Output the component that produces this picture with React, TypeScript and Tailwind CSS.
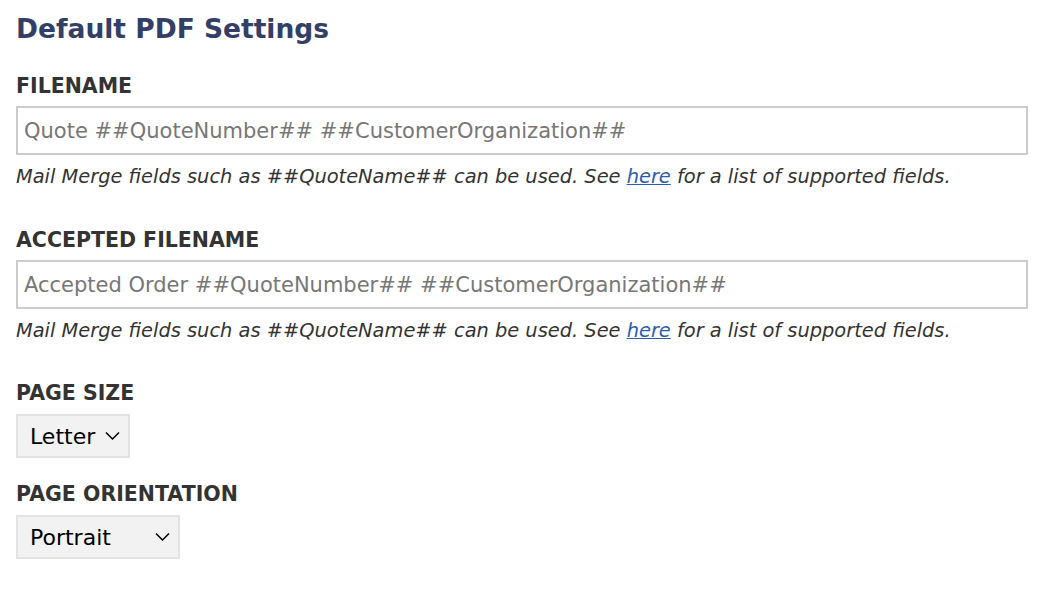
import React from "react";

const font = { fontFamily: '"DejaVu Sans", Verdana, sans-serif' };

const HelpText = () => (
  <p className="mt-[10px] text-[19.4px] leading-6 italic text-[#333]">
    Mail Merge fields such as ##QuoteName## can be used. See{" "}
    <a href="#" className="text-[#2a5db0] underline">
      here
    </a>{" "}
    for a list of supported fields.
  </p>
);

const Label = ({ children, className = "" }: { children: React.ReactNode; className?: string }) => (
  <label className={`block text-[20.5px] leading-6 font-bold text-[#333] ${className}`}>{children}</label>
);

const Chevron = () => (
  <svg width="15" height="9" viewBox="0 0 15 9" fill="none" className="text-black">
    <path d="M1 1l6.5 6.5L14 1" stroke="currentColor" strokeWidth="1.5" />
  </svg>
);

const Select = ({ value, options, width }: { value: string; options: string[]; width: string }) => (
  <div className={`relative mt-[9px] ${width}`}>
    <select
      defaultValue={value}
      className="h-[44px] w-full appearance-none border-2 border-[#e3e3e3] bg-[#f2f2f2] pl-3 text-[22px] text-black outline-none"
      style={font}
    >
      {options.map((o) => (
        <option key={o}>{o}</option>
      ))}
    </select>
    <span className="pointer-events-none absolute right-[10px] top-1/2 -translate-y-1/2">
      <Chevron />
    </span>
  </div>
);

export default function App() {
  return (
    <div className="min-h-screen bg-white px-4 pt-[11px]" style={font}>
      <h1 className="text-[26.5px] leading-9 font-bold text-[#333f66]">Default PDF Settings</h1>

      <Label className="mt-[27px]">FILENAME</Label>
      <input
        type="text"
        placeholder="Quote ##QuoteNumber## ##CustomerOrganization##"
        className="mt-2 block h-[49px] w-[1012px] border-2 border-[#ccc] px-[6px] text-[21px] text-[#333] outline-none placeholder:text-[#777]"
        style={font}
      />
      <HelpText />

      <Label className="mt-[39px]">ACCEPTED FILENAME</Label>
      <input
        type="text"
        placeholder="Accepted Order ##QuoteNumber## ##CustomerOrganization##"
        className="mt-2 block h-[49px] w-[1012px] border-2 border-[#ccc] px-[6px] text-[21px] text-[#333] outline-none placeholder:text-[#777]"
        style={font}
      />
      <HelpText />

      <Label className="mt-[38px]">PAGE SIZE</Label>
      <Select value="Letter" options={["Letter", "Legal", "A4"]} width="w-[114px]" />

      <Label className="mt-[24px]">PAGE ORIENTATION</Label>
      <Select value="Portrait" options={["Portrait", "Landscape"]} width="w-[164px]" />
    </div>
  );
}
